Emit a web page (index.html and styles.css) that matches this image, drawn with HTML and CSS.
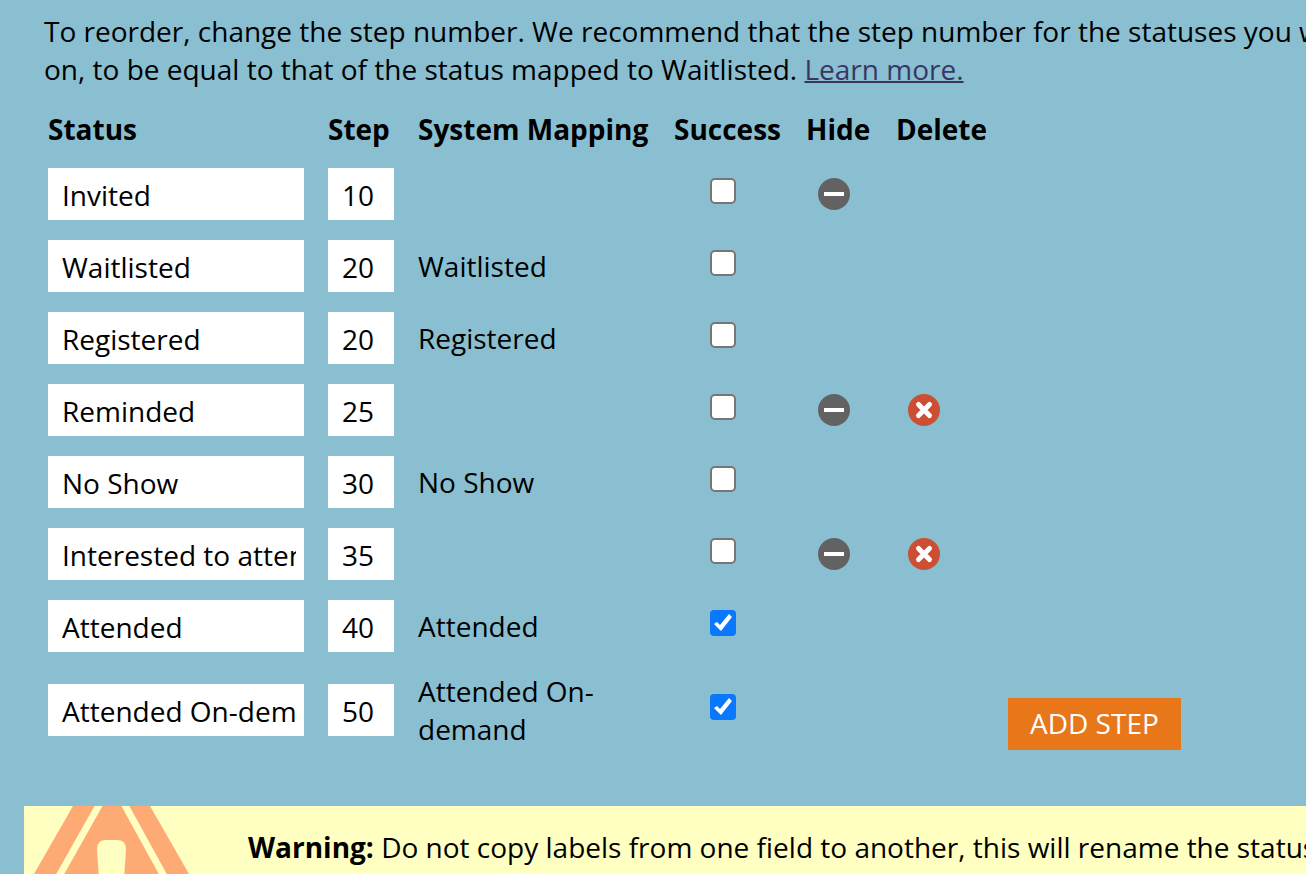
FILE: index.html
```html
<!DOCTYPE html>
<html lang="en">
<head>
<meta charset="utf-8">
<title>Program Statuses</title>
<link rel="stylesheet" href="styles.css">
</head>
<body>
<svg class="sprite" aria-hidden="true">
  <symbol id="minus" viewBox="0 0 32 32"><circle cx="16" cy="16" r="16" fill="#626262"/><path d="M6 16H26" stroke="#fff" stroke-width="4"/></symbol>
  <symbol id="cross" viewBox="0 0 32 32"><circle cx="16" cy="16" r="16" fill="#cc4f33"/><path d="M10.500 10.500L21.500 21.500M21.500 10.500L10.500 21.500" stroke="#fff" stroke-width="5" stroke-linecap="round"/></symbol>
</svg>
<main class="panel">
  <p class="intro">To reorder, change the step number. We recommend that the step number for the statuses you w<br>on, to be equal to that of the status mapped to Waitlisted. <a class="link" href="#">Learn more.</a></p>
  <form class="editor">
    <table class="steps">
      <thead>
        <tr><th class="col-status">Status</th><th class="col-step">Step</th><th class="col-map">System Mapping</th><th class="col-success">Success</th><th class="col-hide">Hide</th><th class="col-delete">Delete</th></tr>
      </thead>
      <tbody>
        <tr><td><input class="field" aria-label="Status" value="Invited"></td><td><input class="field" aria-label="Step" value="10"></td><td></td><td><input class="check" type="checkbox" aria-label="Success"></td><td><button class="icon" type="button" aria-label="Hide"><svg><use href="#minus"/></svg></button></td><td></td></tr>
        <tr><td><input class="field" aria-label="Status" value="Waitlisted"></td><td><input class="field" aria-label="Step" value="20"></td><td>Waitlisted</td><td><input class="check" type="checkbox" aria-label="Success"></td><td></td><td></td></tr>
        <tr><td><input class="field" aria-label="Status" value="Registered"></td><td><input class="field" aria-label="Step" value="20"></td><td>Registered</td><td><input class="check" type="checkbox" aria-label="Success"></td><td></td><td></td></tr>
        <tr><td><input class="field" aria-label="Status" value="Reminded"></td><td><input class="field" aria-label="Step" value="25"></td><td></td><td><input class="check" type="checkbox" aria-label="Success"></td><td><button class="icon" type="button" aria-label="Hide"><svg><use href="#minus"/></svg></button></td><td><button class="icon" type="button" aria-label="Delete"><svg><use href="#cross"/></svg></button></td></tr>
        <tr><td><input class="field" aria-label="Status" value="No Show"></td><td><input class="field" aria-label="Step" value="30"></td><td>No Show</td><td><input class="check" type="checkbox" aria-label="Success"></td><td></td><td></td></tr>
        <tr><td><input class="field" aria-label="Status" value="Interested to attend"></td><td><input class="field" aria-label="Step" value="35"></td><td></td><td><input class="check" type="checkbox" aria-label="Success"></td><td><button class="icon" type="button" aria-label="Hide"><svg><use href="#minus"/></svg></button></td><td><button class="icon" type="button" aria-label="Delete"><svg><use href="#cross"/></svg></button></td></tr>
        <tr><td><input class="field" aria-label="Status" value="Attended"></td><td><input class="field" aria-label="Step" value="40"></td><td>Attended</td><td><input class="check" type="checkbox" aria-label="Success" checked></td><td></td><td></td></tr>
        <tr><td><input class="field" aria-label="Status" value="Attended On-demand"></td><td><input class="field" aria-label="Step" value="50"></td><td>Attended On-demand</td><td><input class="check" type="checkbox" aria-label="Success" checked></td><td></td><td></td></tr>
      </tbody>
    </table>
    <button class="add" type="button">ADD STEP</button>
  </form>
  <section class="warning">
    <svg class="sign" viewBox="0 0 176 68" aria-hidden="true">
      <path d="M49 0H126L165 68H10Z" fill="#fdaa75"/>
      <path d="M79 -8L34 72M97 -8L141 72" stroke="#ffffc1" stroke-width="7" fill="none"/>
      <path d="M73 43Q73 34 82 34H93Q102 34 102 43L100 74H75Z" fill="#ffffc1"/>
    </svg>
    <p class="warning-text"><strong>Warning:</strong> Do not copy labels from one field to another, this will rename the status</p>
  </section>
</main>
</body>
</html>
```

FILE: styles.css
```css
* {
  box-sizing: border-box;
}

body {
  margin: 0;
  background: #89bfd1;
  color: #000;
  font: 28px/38px "Open Sans", sans-serif;
  overflow: hidden;
}

.sprite {
  display: none;
}

.panel {
  padding-top: 12px;
  padding-left: 24px;
}

.intro {
  margin: 0;
  padding-left: 20px;
  white-space: nowrap;
  overflow: hidden;
}

.link {
  color: #3a3663;
  text-decoration-thickness: 2px;
}

.editor {
  display: flex;
  align-items: flex-end;
  margin: 12px 0 48px;
  padding-left: 12px;
}

.steps {
  width: 972px;
  table-layout: fixed;
  border-collapse: collapse;
}

.steps th,
.steps td {
  padding: 10px 12px;
  text-align: left;
  vertical-align: middle;
}

.steps th {
  white-space: nowrap;
}

.col-status {
  width: 280px;
}

.col-step,
.col-hide {
  width: 90px;
}

.col-map {
  width: 256px;
}

.col-success {
  width: 132px;
}

.field {
  display: block;
  width: 100%;
  height: 52px;
  padding: 2px 8px 0 14px;
  border: 0;
  border-radius: 0;
  background: #fff;
  color: #000;
  font: inherit;
}

.check {
  appearance: none;
  display: block;
  width: 26px;
  height: 26px;
  margin: 0 auto 6px 36px;
  border: 2px solid #767676;
  border-radius: 5px;
  background: #fff;
}

.check:checked {
  border: 0;
  border-radius: 4px;
  background: #0a77ff;
}

.check:checked::before {
  content: "";
  display: block;
  width: 26px;
  height: 26px;
  background: #fff;
  clip-path: polygon(4px 14px, 7px 12px, 10px 15px, 19px 4px, 22px 7px, 11px 21px);
}

.icon {
  display: block;
  width: 32px;
  height: 32px;
  margin-left: 12px;
  padding: 0;
  border: 0;
  background: none;
}

.icon svg {
  display: block;
  width: 32px;
  height: 32px;
}

.add {
  height: 52px;
  margin-bottom: 8px;
  padding: 0 22px 2px;
  border: 0;
  background: #e8771a;
  color: #fff;
  font: inherit;
}

.warning {
  display: flex;
  overflow: hidden;
  background: #ffffc1;
}

.sign {
  flex: none;
  width: 176px;
  height: 68px;
}

.warning-text {
  margin: 0;
  padding: 22px 0 0 48px;
  white-space: nowrap;
}
```
